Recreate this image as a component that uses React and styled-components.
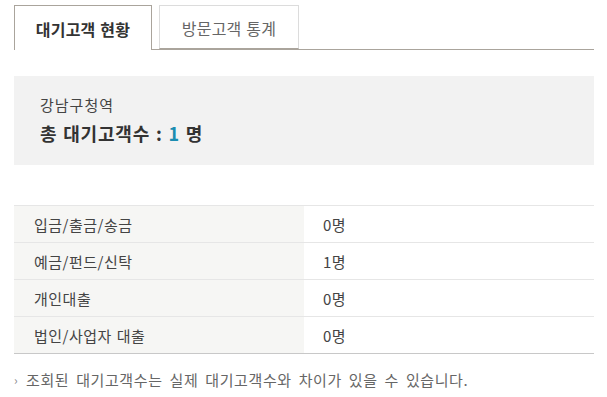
import React from "react";
import styled, { createGlobalStyle } from "styled-components";

const Global = createGlobalStyle`
  html, body { margin: 0; padding: 0; background: #fff; }
  body { font-family: "Noto Sans CJK KR", "Noto Sans", sans-serif; color: #333; }
`;

const Page = styled.div`
  width: 580px;
  padding: 5px 13px 0 14px;
`;

const TabBar = styled.div`
  display: flex;
  gap: 7px;
  border-bottom: 1px solid #aaa49c;
  height: 44px;
`;

const Tab = styled.div`
  box-sizing: border-box;
  width: ${(p) => p.$w}px;
  height: ${(p) => (p.$active ? 45 : 44)}px;
  display: flex;
  align-items: center;
  justify-content: center;
  font-size: 16px;
  letter-spacing: 0.2px;
  word-spacing: 1px;
  border: 1px solid ${(p) => (p.$active ? "#aaa49c" : "#dcdcdc")};
  border-bottom: ${(p) => (p.$active ? "none" : "1px solid #aaa49c")};
  background: #fff;
  color: ${(p) => (p.$active ? "#333" : "#666")};
  font-weight: ${(p) => (p.$active ? 700 : 400)};
  padding-top: 1px;
`;

const Summary = styled.div`
  margin-top: 26px;
  background: #f2f2f2;
  height: 89px;
  box-sizing: border-box;
  padding: 19px 26px 0;
`;

const Station = styled.div`
  font-size: 15px;
  line-height: 20px;
  letter-spacing: 1px;
  color: #444;
`;

const Total = styled.div`
  margin-top: 7px;
  font-size: 18px;
  line-height: 22px;
  font-weight: 700;
  letter-spacing: 0.8px;
  word-spacing: 1px;
  color: #333;
`;

const Num = styled.span`
  color: #1b8db1;
`;

const Table = styled.div`
  margin-top: 40px;
  border-top: 1px solid #e6e6e6;
  border-bottom: 1px solid #c8c8c8;
`;

const Row = styled.div`
  display: grid;
  grid-template-columns: 290px 1fr;
  height: 36px;
  & + & {
    border-top: 1px solid #e6e6e6;
  }
`;

const Cell = styled.div`
  display: flex;
  align-items: center;
  font-size: 15px;
  letter-spacing: 0.5px;
  word-spacing: 1px;
  color: #444;
`;

const Label = styled(Cell)`
  background: #f6f6f4;
  padding-left: 20px;
`;

const Value = styled(Cell)`
  padding-left: 19px;
`;

const Note = styled.div`
  margin-top: 16px;
  display: flex;
  align-items: center;
  font-size: 15px;
  letter-spacing: 0.6px;
  word-spacing: 3px;
  color: #666;
  line-height: 20px;
`;

const Bullet = styled.span`
  font-size: 12px;
  color: #888;
  width: 12px;
  margin-right: 0;
`;

const rows = [
  ["입금/출금/송금", "0명"],
  ["예금/펀드/신탁", "1명"],
  ["개인대출", "0명"],
  ["법인/사업자 대출", "0명"],
];

export default function App() {
  return (
    <Page>
      <Global />
      <TabBar>
        <Tab $active $w={138}>대기고객 현황</Tab>
        <Tab $w={140}>방문고객 통계</Tab>
      </TabBar>
      <Summary>
        <Station>강남구청역</Station>
        <Total>
          총 대기고객수 : <Num>1</Num> 명
        </Total>
      </Summary>
      <Table>
        {rows.map(([l, v]) => (
          <Row key={l}>
            <Label>{l}</Label>
            <Value>{v}</Value>
          </Row>
        ))}
      </Table>
      <Note>
        <Bullet>›</Bullet>조회된 대기고객수는 실제 대기고객수와 차이가 있을 수 있습니다.
      </Note>
    </Page>
  );
}
